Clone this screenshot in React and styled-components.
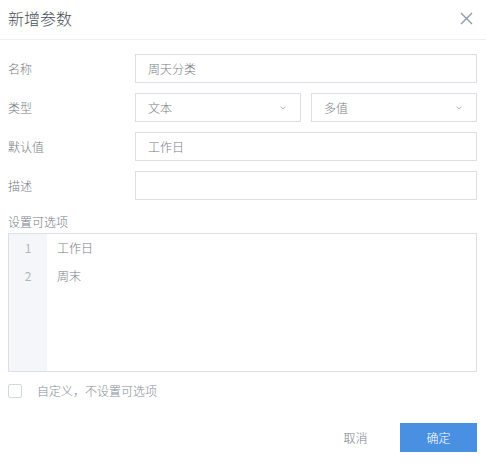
import React from "react";
import styled, { createGlobalStyle } from "styled-components";

const GlobalStyle = createGlobalStyle`
  html, body {
    margin: 0;
    padding: 0;
    background: #ffffff;
  }
  body {
    font-family: "Noto Sans CJK SC", "Noto Sans", sans-serif;
  }
`;

const Dialog = styled.div`
  width: 486px;
  height: 468px;
  box-sizing: border-box;
  background: #fff;
  display: flex;
  flex-direction: column;
`;

const Header = styled.div`
  height: 40px;
  box-sizing: border-box;
  border-bottom: 1px solid #ebeef5;
  display: flex;
  align-items: center;
  justify-content: space-between;
  padding: 0 13px 3px 8px;
`;

const Title = styled.div`
  font-size: 16px;
  font-weight: 300;
  color: #4a4f58;
`;

const CloseButton = styled.button`
  border: none;
  background: none;
  padding: 0;
  width: 13px;
  height: 13px;
  display: flex;
  cursor: pointer;
`;

const Body = styled.div`
  padding: 14px 9px 0 8px;
  display: flex;
  flex-direction: column;
`;

const Form = styled.div`
  display: flex;
  flex-direction: column;
  gap: 10px;
`;

const Row = styled.div`
  display: flex;
  align-items: center;
`;

const Label = styled.div`
  width: 127px;
  flex-shrink: 0;
  font-size: 12px;
  font-weight: 300;
  color: #787d86;
`;

const Field = styled.div`
  flex: 1;
  display: flex;
  gap: 10px;
`;

const Input = styled.div`
  flex: 1;
  height: 29px;
  box-sizing: border-box;
  border: 1px solid #dcdfe6;
  padding: 0 14px 0 12px;
  display: flex;
  align-items: center;
  justify-content: space-between;
  font-size: 12px;
  font-weight: 300;
  color: #787d86;
`;

const SectionLabel = styled.div`
  margin-top: 12px;
  line-height: 20px;
  font-size: 12px;
  font-weight: 300;
  color: #787d86;
`;

const OptionsBox = styled.div`
  margin-top: 1px;
  height: 139px;
  box-sizing: border-box;
  border: 1px solid #dcdfe6;
  display: flex;
`;

const Gutter = styled.div`
  width: 38px;
  background: #f5f6fa;
  display: flex;
  flex-direction: column;
  align-items: center;
`;

const LineNo = styled.div`
  line-height: 28px;
  font-size: 12px;
  color: #b0b5bf;
`;

const Lines = styled.div`
  flex: 1;
  padding-left: 10px;
  display: flex;
  flex-direction: column;
`;

const Line = styled.div`
  line-height: 28px;
  font-size: 12px;
  font-weight: 300;
  color: #787d86;
`;

const CheckRow = styled.label`
  margin-top: 10px;
  display: flex;
  align-items: center;
  gap: 15px;
  font-size: 12px;
  font-weight: 300;
  color: #878c95;
`;

const Checkbox = styled.span`
  width: 14px;
  height: 14px;
  box-sizing: border-box;
  border: 1px solid #d3d7df;
  border-radius: 2px;
`;

const Footer = styled.div`
  margin-top: 24px;
  display: flex;
  justify-content: flex-end;
  gap: 6px;
`;

const Button = styled.button`
  width: 77px;
  height: 29px;
  border: none;
  font-family: inherit;
  font-size: 12px;
  font-weight: 300;
  cursor: pointer;
  background: ${(p) => (p.$primary ? "#4a90e2" : "transparent")};
  color: ${(p) => (p.$primary ? "#ffffff" : "#787d86")};
`;

const Chevron = () => (
  <svg width="6" height="4" viewBox="0 0 6 4" fill="none">
    <path d="M0.5 0.8L3 3L5.5 0.8" stroke="#aeb4c0" strokeWidth="1" />
  </svg>
);

const fields = [
  { label: "名称", values: ["周天分类"] },
  { label: "类型", values: ["文本", "多值"], select: true },
  { label: "默认值", values: ["工作日"] },
  { label: "描述", values: [""] },
];

const options = ["工作日", "周末"];

export default function App() {
  return (
    <>
      <GlobalStyle />
      <Dialog>
        <Header>
          <Title>新增参数</Title>
          <CloseButton aria-label="close">
            <svg width="13" height="13" viewBox="0 0 13 13">
              <path d="M1 1L12 12M12 1L1 12" stroke="#8c9ab0" strokeWidth="1.4" />
            </svg>
          </CloseButton>
        </Header>
        <Body>
          <Form>
            {fields.map((f) => (
              <Row key={f.label}>
                <Label>{f.label}</Label>
                <Field>
                  {f.values.map((v, i) => (
                    <Input key={i}>
                      <span>{v}</span>
                      {f.select && <Chevron />}
                    </Input>
                  ))}
                </Field>
              </Row>
            ))}
          </Form>
          <SectionLabel>设置可选项</SectionLabel>
          <OptionsBox>
            <Gutter>
              {options.map((_, i) => (
                <LineNo key={i}>{i + 1}</LineNo>
              ))}
            </Gutter>
            <Lines>
              {options.map((o) => (
                <Line key={o}>{o}</Line>
              ))}
            </Lines>
          </OptionsBox>
          <CheckRow>
            <Checkbox />
            自定义，不设置可选项
          </CheckRow>
          <Footer>
            <Button>取消</Button>
            <Button $primary>确定</Button>
          </Footer>
        </Body>
      </Dialog>
    </>
  );
}
